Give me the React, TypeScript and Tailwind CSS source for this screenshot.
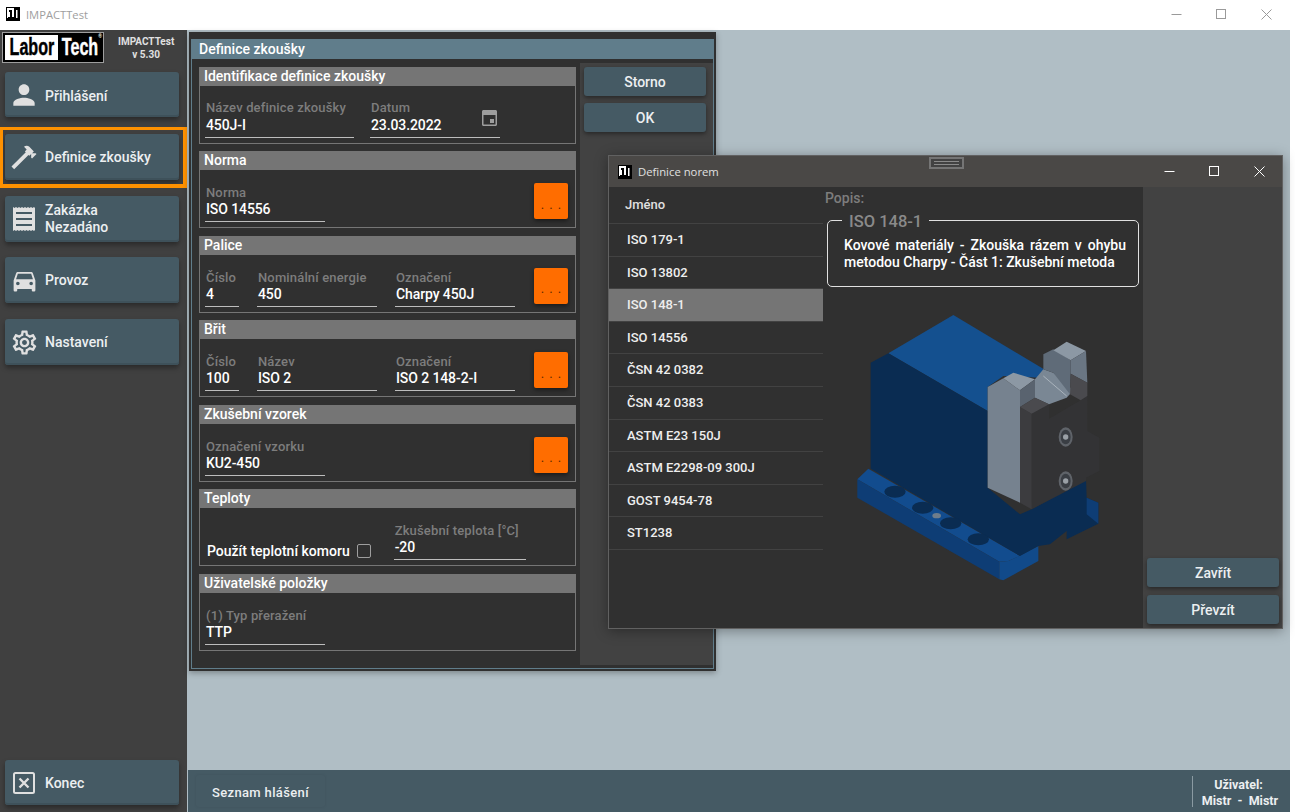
import React from "react";
import { MdPerson, MdOutlineSettings } from "react-icons/md";

function AppIcon() {
  return (
    <svg width="14" height="14" viewBox="0 0 14 14" className="shrink-0">
      <rect width="14" height="14" fill="#000" />
      <rect x="1" y="1" width="7" height="10" fill="#fff" />
      <rect x="4" y="3" width="2" height="7" fill="#000" />
      <rect x="3" y="3" width="1" height="2" fill="#000" />
      <rect x="2" y="10" width="6" height="1" fill="#000" />
      <rect x="10" y="3" width="1.5" height="8" fill="#fff" />
    </svg>
  );
}

function WinControls({ color, gap }: { color: string; gap: string }) {
  return (
    <div className={`flex items-center ${gap}`}>
      <svg width="11" height="11" viewBox="0 0 11 11"><path d="M0.5 5.5H10.5" stroke={color} /></svg>
      <svg width="11" height="11" viewBox="0 0 11 11"><rect x="0.5" y="0.5" width="9" height="9" fill="none" stroke={color} /></svg>
      <svg width="11" height="11" viewBox="0 0 11 11"><path d="M0.5 0.5L10.5 10.5M10.5 0.5L0.5 10.5" stroke={color} /></svg>
    </div>
  );
}

function HammerIcon() {
  return (
    <svg width="30" height="30" viewBox="0 0 24 24" fill="#e0e0e0">
      <path d="M2 19.63L13.43 8.2L12.72 7.5L14.14 6.07L12 3.89C13.2 2.7 15.09 2.7 16.27 3.89L19.87 7.5L18.45 8.91H21.29L22 9.62L18.45 13.21L17.74 12.5V9.62L16.27 11.04L15.56 10.33L4.13 21.76L2 19.63Z" />
    </svg>
  );
}

function ReceiptIcon() {
  return (
    <svg width="24" height="26" viewBox="0 0 24 26" fill="#e0e0e0">
      <path d="M1 1L2.5 2L4 1L5.5 2L7 1L8.5 2L10 1L11.5 2L13 1L14.5 2L16 1L17.5 2L19 1L20.5 2L22 1L23 2V24L22 25L20.5 24L19 25L17.5 24L16 25L14.5 24L13 25L11.5 24L10 25L8.5 24L7 25L5.5 24L4 25L2.5 24L1 25Z" />
      <path d="M4 7H20M4 13H20M4 19H20" stroke="#455a64" strokeWidth="2" />
    </svg>
  );
}

function CarIcon() {
  return (
    <svg width="29" height="29" viewBox="0 0 24 24" fill="#e0e0e0">
      <path d="M5,11L6.5,6.5H17.5L19,11M17.5,16A1.5,1.5 0 0,1 16,14.5A1.5,1.5 0 0,1 17.5,13A1.5,1.5 0 0,1 19,14.5A1.5,1.5 0 0,1 17.5,16M6.5,16A1.5,1.5 0 0,1 5,14.5A1.5,1.5 0 0,1 6.5,13A1.5,1.5 0 0,1 8,14.5A1.5,1.5 0 0,1 6.5,16M18.92,6C18.72,5.42 18.16,5 17.5,5H6.5C5.84,5 5.28,5.42 5.08,6L3,12V20A1,1 0 0,0 4,21H5A1,1 0 0,0 6,20V19H18V20A1,1 0 0,0 19,21H20A1,1 0 0,0 21,20V12L18.92,6Z" />
    </svg>
  );
}

function CloseBoxIcon() {
  return (
    <svg width="24" height="24" viewBox="0 0 24 24" fill="none" stroke="#e0e0e0" strokeWidth="2">
      <rect x="2" y="2" width="20" height="20" rx="1.5" />
      <path d="M7.5 7.5L16.5 16.5M16.5 7.5L7.5 16.5" strokeWidth="2.4" />
    </svg>
  );
}

function CalendarIcon() {
  return (
    <svg width="15" height="16" viewBox="0 0 15 16" className="absolute right-[3px] top-[10px]">
      <path d="M1.5 0H13.5C14.3 0 15 .7 15 1.5V14.5C15 15.3 14.3 16 13.5 16H1.5C.7 16 0 15.3 0 14.5V1.5C0 .7 .7 0 1.5 0ZM1.5 5V14.5H13.5V5Z" fill="#9e9e9e" fillRule="evenodd" />
      <rect x="8" y="9" width="4" height="4" fill="#9e9e9e" />
    </svg>
  );
}

function NavButton({ icon, children, className }: { icon: React.ReactNode; children: React.ReactNode; className?: string }) {
  return (
    <div className={`relative flex w-[174px] items-center rounded-[3px] bg-[#455a64] shadow-[inset_0_-2px_0_#3e515a,0_3px_5px_rgba(0,0,0,0.35)] ${className ?? ""}`}>
      <div className="flex w-[40px] shrink-0 justify-center pr-[2px]">{icon}</div>
      <div className="text-[14px] font-medium leading-[17px] text-[#eceff1]">{children}</div>
    </div>
  );
}

function Sidebar() {
  return (
    <aside className="flex w-[187px] shrink-0 flex-col bg-[#404040] px-[5px] pt-[2px]">
      <div className="-ml-[3px] flex items-center">
        <div className="relative flex h-[31px] w-[102px] items-stretch border border-[#9e9e9e] bg-black p-[2px] font-['Liberation_Sans',sans-serif] text-[23px] font-bold leading-[25px]">
          <span className="flex w-[53px] justify-center overflow-hidden bg-white text-black"><span className="inline-block scale-x-[0.7] [-webkit-text-stroke:0.4px_black]">Labor</span></span>
          <span className="flex flex-1 justify-center overflow-hidden text-white"><span className="inline-block scale-x-[0.7] [-webkit-text-stroke:0.4px_white]">Tech</span></span>
          <span className="absolute right-[1px] top-[1px] text-[5px] leading-none text-white">®</span>
        </div>
        <div className="ml-[14px] text-center text-[10px] font-bold leading-[13px] text-[#e0e0e0]">
          <div>IMPACTTest</div>
          <div>v 5.30</div>
        </div>
      </div>
      <NavButton icon={<MdPerson size={32} color="#e0e0e0" />} className="mt-[9px] h-[45px]"><div className="pt-[3px]">Přihlášení</div></NavButton>
      <NavButton icon={<HammerIcon />} className="mt-[17px] h-[46px]">
        <div className="pointer-events-none absolute -bottom-[8px] -left-[6px] -right-[8px] -top-[7px] border-[4px] border-t-[3px] border-[#ff9100]" />
        Definice zkoušky
      </NavButton>
      <NavButton icon={<ReceiptIcon />} className="mt-[16px] h-[46px]"><div>Zakázka</div><div>Nezadáno</div></NavButton>
      <NavButton icon={<CarIcon />} className="mt-[15px] h-[46px]">Provoz</NavButton>
      <NavButton icon={<MdOutlineSettings size={29} color="#e0e0e0" />} className="mt-[16px] h-[46px]">Nastavení</NavButton>
      <NavButton icon={<CloseBoxIcon />} className="mb-[7px] mt-auto h-[45px]"><div className="pt-[1px]">Konec</div></NavButton>
    </aside>
  );
}

function Field({ label, value, w, gap = "mt-0" }: { label: string; value: string; w: string; gap?: string }) {
  return (
    <div className={`${w} shrink-0 border-b border-[#bdbdbd] pb-[4px] pl-[1px] font-medium leading-[16px]`}>
      <div className="whitespace-nowrap text-[13px] tracking-[0.15px] text-[#7d7d7d]">{label}</div>
      <div className={`whitespace-nowrap text-[14px] tracking-[-0.1px] text-white ${gap}`}>{value}</div>
    </div>
  );
}

function DotsButton() {
  return (
    <div className="mb-[3px] ml-auto mr-[2px] flex h-[36px] w-[34px] shrink-0 items-center justify-center rounded-[2px] bg-[#ff6d00] pl-[5px] pt-[6px] text-[13px] leading-none tracking-[5px] text-[#5a2a00] shadow-[0_2px_4px_rgba(0,0,0,0.45)]">
      ...
    </div>
  );
}

function Group({ title, children }: { title: string; children: React.ReactNode }) {
  return (
    <section className="flex h-[77px] flex-col border border-[#757575]">
      <h2 className="h-[18px] shrink-0 bg-[#757575] pl-[4px] text-[14px] font-medium leading-[16px] text-white">{title}</h2>
      <div className="flex flex-1 items-end px-[5px] pb-[5px]">{children}</div>
    </section>
  );
}

function DefinitionWindow() {
  return (
    <div className="absolute left-[2px] top-[2px] h-[639px] w-[527px] bg-[#303030] px-[2px] pb-[2px] pt-[7px] shadow-[0_2px_6px_rgba(0,0,0,0.3)]">
      <div className="flex h-full flex-col border border-[#607d8b]">
        <div className="h-[19px] shrink-0 bg-[#607d8b] pl-[7px] text-[14px] font-medium leading-[19px] text-white">Definice zkoušky</div>
        <div className="flex pl-[7px] pt-[8px]">
          <div className="flex w-[377px] flex-col gap-[7.4px]">
            <Group title="Identifikace definice zkoušky">
              <Field label="Název definice zkoušky" value="450J-I" w="w-[149px]" gap="mt-[1px]" />
              <div className="relative ml-[16px]">
                <Field label="Datum" value="23.03.2022" w="w-[130px]" gap="mt-[1px]" />
                <CalendarIcon />
              </div>
            </Group>
            <Group title="Norma">
              <Field label="Norma" value="ISO 14556" w="w-[120px]" />
              <DotsButton />
            </Group>
            <Group title="Palice">
              <Field label="Číslo" value="4" w="w-[34px]" />
              <div className="ml-[18px]"><Field label="Nominální energie" value="450" w="w-[120px]" /></div>
              <div className="ml-[18px]"><Field label="Označení" value="Charpy 450J" w="w-[120px]" /></div>
              <DotsButton />
            </Group>
            <Group title="Břit">
              <Field label="Číslo" value="100" w="w-[34px]" />
              <div className="ml-[18px]"><Field label="Název" value="ISO 2" w="w-[120px]" /></div>
              <div className="ml-[18px]"><Field label="Označení" value="ISO 2 148-2-I" w="w-[120px]" /></div>
              <DotsButton />
            </Group>
            <Group title="Zkušební vzorek">
              <Field label="Označení vzorku" value="KU2-450" w="w-[120px]" />
              <DotsButton />
            </Group>
            <Group title="Teploty">
              <div className="mb-[1px] ml-[2px] flex items-center text-[14px] font-medium leading-[16px] text-white">
                Použít teplotní komoru
                <span className="ml-[7px] block h-[14px] w-[14px] rounded-[2px] border border-[#9e9e9e]" />
              </div>
              <div className="ml-[23px]"><Field label="Zkušební teplota [°C]" value="-20" w="w-[132px]" /></div>
            </Group>
            <div className="mt-[0.6px]">
              <Group title="Uživatelské položky">
                <Field label="(1) Typ přeražení" value="TTP" w="w-[120px]" />
              </Group>
            </div>
          </div>
          <div className="ml-[4px] -mt-[4px] flex h-[602px] w-[133px] flex-col gap-[7px] bg-[#424242] p-[4px] pr-[7px]">
            <DialogButton>Storno</DialogButton>
            <DialogButton>OK</DialogButton>
          </div>
        </div>
      </div>
    </div>
  );
}

function DialogButton({ children }: { children: React.ReactNode }) {
  return (
    <div className="flex h-[29px] items-center justify-center rounded-[3px] bg-[#455a64] pt-[1px] text-[14px] font-medium text-[#eceff1] shadow-[0_2px_4px_rgba(0,0,0,0.4)]">
      {children}
    </div>
  );
}

function PartDrawing() {
  return (
    <svg width="290" height="290" viewBox="0 0 870 870" className="shrink-0">
      {/* base */}
      <polygon points="52,535 85,503 540,765 505,780 478,782" fill="#124c8e" />
      <polygon points="52,535 478,782 478,835 52,590" fill="#0e3d75" />
      <polygon points="478,782 505,780 537,765 595,735 595,780 490,838 478,835" fill="#114a8a" />
      {/* body */}
      <polygon points="145,157 340,42 612,205 600,230 490,225 443,258 443,330" fill="#14508f" />
      <polygon points="92,185 145,157 443,330 443,560 540,640 540,765 92,503" fill="#0a2c52" />
      <polygon points="540,640 575,625 738,535 740,590 775,605 775,668 680,715 680,690 630,730 595,735 540,765" fill="#0a2c52" />
      <polygon points="740,590 775,605 775,668 740,640" fill="#0e3d75" />
      {/* holes */}
      <ellipse cx="165" cy="572" rx="32" ry="18" fill="#0a2c52" />
      <ellipse cx="248" cy="620" rx="32" ry="18" fill="#0a2c52" />
      <ellipse cx="332" cy="667" rx="32" ry="18" fill="#0a2c52" />
      <ellipse cx="415" cy="715" rx="32" ry="18" fill="#0a2c52" />
      <ellipse cx="290" cy="644" rx="13" ry="8" fill="#6f7d8b" />
      {/* holder */}
      <polygon points="585,235 610,205 640,215 700,268 680,290 627,310 585,290" fill="#7a8794" />
      <path d="M610 225L680 285" stroke="#aab4bd" strokeWidth="3" />
      <polygon points="610,160 640,145 692,178 692,218 690,280 640,215 610,205" fill="#5f6b78" />
      <polygon points="640,148 680,122 738,150 692,178" fill="#8c98a4" />
      <polygon points="692,178 738,150 742,245 692,218" fill="#6a7683" />
      <polygon points="443,258 490,232 540,268 540,605 443,560" fill="#76828f" />
      <polygon points="490,232 520,215 585,235 540,268" fill="#8c98a4" />
      <polygon points="540,268 585,235 585,290 540,318" fill="#59636f" />
      <polygon points="575,338 627,310 627,353 722,298 742,285 742,390 778,410 778,510 738,530 738,540 575,625" fill="#333335" />
      <polygon points="540,318 575,338 575,625 540,605" fill="#3c3c3f" />
      <polygon points="540,318 585,290 627,310 575,338" fill="#4a4a4e" />
      <polygon points="692,218 742,245 742,285 722,298 690,280" fill="#4a4a4e" />
      <ellipse cx="677" cy="408" rx="21" ry="29" fill="#5f6369" />
      <ellipse cx="677" cy="408" rx="15" ry="22" fill="#3a3e44" />
      <circle cx="677" cy="408" r="8" fill="#9aa0a6" />
      <ellipse cx="677" cy="540" rx="21" ry="29" fill="#5f6369" />
      <ellipse cx="677" cy="540" rx="15" ry="22" fill="#3a3e44" />
      <circle cx="677" cy="540" r="8" fill="#9aa0a6" />
    </svg>
  );
}

const norms = ["ISO 179-1", "ISO 13802", "ISO 148-1", "ISO 14556", "ČSN 42 0382", "ČSN 42 0383", "ASTM E23 150J", "ASTM E2298-09 300J", "GOST 9454-78", "ST1238"];

function NormsDialog() {
  return (
    <div className="absolute left-[421px] top-[125px] flex h-[474px] w-[675px] flex-col border border-[#616161] bg-[#303030] shadow-[0_2px_12px_rgba(0,0,0,0.35)]">
      <div className="relative flex h-[31px] shrink-0 items-center bg-[#4a4846] pl-[9px] pr-[17px]">
        <AppIcon />
        <span className="ml-[6px] pt-[2px] font-['Open_Sans',sans-serif] text-[11.3px] text-[#e0e0e0]">Definice norem</span>
        <div className="ml-auto"><WinControls color="#ffffff" gap="gap-[34px]" /></div>
        <div className="absolute left-[320px] top-[1px] flex h-[12px] w-[35px] flex-col justify-center gap-[2px] border-2 border-[#757575] bg-[#424242] px-[3px]">
          <div className="h-px bg-[#8a8a8a]" />
          <div className="h-px bg-[#8a8a8a]" />
        </div>
      </div>
      <div className="flex flex-1">
        <div className="w-[214px] shrink-0">
          <div className="flex h-[37px] items-center border-b border-[#424242] pl-[16px] text-[13px] font-medium text-[#e0e0e0]">Jméno</div>
          {norms.map((n) => (
            <div key={n} className={`flex h-[32.6px] items-center border-b border-[#424242] pl-[18px] text-[13px] font-medium text-[#eeeeee] ${n === "ISO 148-1" ? "bg-[#757575]" : ""}`}>
              {n}
            </div>
          ))}
        </div>
        <div className="flex w-[320px] shrink-0 flex-col pl-[2px]">
          <div className="h-[16px] pt-[3px] text-[14px] font-medium leading-[16px] text-[#7d7d7d]">Popis:</div>
          <fieldset className="ml-[2px] mt-[7px] h-[77px] w-[312px] rounded-[5px] border border-[#e0e0e0] pl-[16px] pr-[12px]">
            <legend className="-ml-[2px] px-[7px] text-[16.5px] font-medium leading-[20px] text-[#8a8a8a]"><span className="inline-block translate-y-[2px]">ISO 148-1</span></legend>
            <p className="mt-[7px] text-justify text-[14px] font-medium leading-[17px] text-white">
              Kovové materiály - Zkouška rázem v ohybu metodou Charpy - Část 1: Zkušební metoda
            </p>
          </fieldset>
          <div className="ml-[15px] mt-[14px]"><PartDrawing /></div>
        </div>
        <div className="flex flex-1 flex-col justify-end gap-[8px] bg-[#424242] pb-[4px] pl-[4px] pr-[3px]">
          <DialogButton>Zavřít</DialogButton>
          <DialogButton>Převzít</DialogButton>
        </div>
      </div>
    </div>
  );
}

function StatusBar() {
  return (
    <footer className="ml-px flex h-[42px] shrink-0 items-center bg-[#455a64] pl-[8px] text-[13px] font-medium text-[#eceff1]">
      <div className="flex h-[32px] w-[129px] items-center rounded-[3px] pl-[16px] pt-[3px] tracking-[0.35px] shadow-[0_0_3px_rgba(0,0,0,0.08)]">Seznam hlášení</div>
      <div className="ml-auto mr-[11px] flex h-[31px] w-[87px] flex-col items-center justify-center border-l border-[#8a9aa2] pl-[8px] pt-[3px] text-[12.5px] font-bold leading-[16px]">
        <div className="pr-[3px]">Uživatel:</div>
        <div className="whitespace-pre">Mistr  -  Mistr</div>
      </div>
    </footer>
  );
}

export default function App() {
  return (
    <div className="flex h-[812px] w-[1295px] flex-col overflow-hidden bg-white font-[Roboto,sans-serif]">
      <header className="flex h-[30px] w-[1290px] shrink-0 items-center bg-white pl-[6px] pr-[18px]">
        <div className="-mt-[3px]"><AppIcon /></div>
        <span className="ml-[6px] font-['Open_Sans',sans-serif] text-[11.2px] text-[#9e9e9e]">IMPACTTest</span>
        <div className="-mt-[2px] ml-auto"><WinControls color="#9a9a9a" gap="gap-[34px]" /></div>
      </header>
      <div className="flex min-h-0 w-[1290px] flex-1">
        <Sidebar />
        <main className="flex flex-1 flex-col bg-[#b0bec5]">
          <div className="relative flex-1">
            <DefinitionWindow />
            <NormsDialog />
          </div>
          <StatusBar />
        </main>
      </div>
    </div>
  );
}
